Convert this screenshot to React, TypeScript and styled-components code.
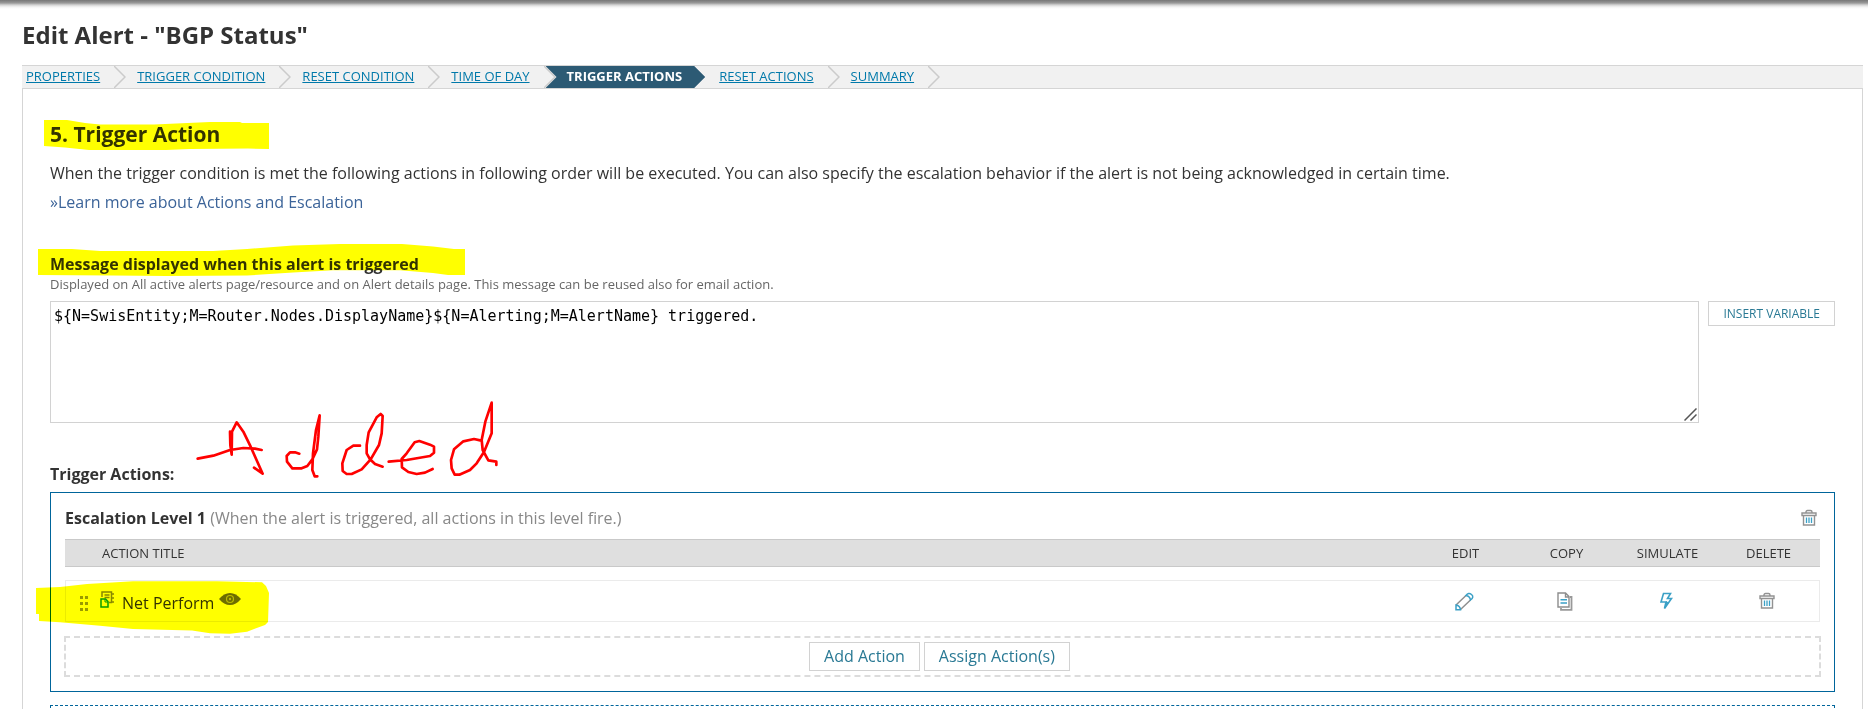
import React from "react";
import styled, { createGlobalStyle } from "styled-components";

const Global = createGlobalStyle`
  *, *::before, *::after { box-sizing: border-box; }
  body { margin: 0; background: #fff; color: #333; font: 16px/22px "Open Sans", "Noto Sans", sans-serif; }
  html { overflow: hidden; }
  #root { overflow: hidden; }
`;

const Page = styled.div`
  padding: 0 5px 0 22px;
  background: linear-gradient(#777 0, #999 3px, #d4d4d4 5px, #f4f4f4 7px, #fff 9px) top / 100% 10px no-repeat;
`;

const PageTitle = styled.h1`
  margin: 0;
  padding: 20px 0 15px;
  font-size: 24px;
  line-height: 30px;
  font-weight: 700;
`;

const Steps = styled.nav`
  display: flex;
  height: 24px;
  background: #f1f1f1;
  border-top: 1px solid #d5d5d5;
  border-bottom: 1px solid #d5d5d5;
  font-size: 13px;
  line-height: 20px;
  text-transform: uppercase;
`;

const Step = styled.span<{ $active?: boolean }>`
  display: flex;
  padding-left: ${(p) => (p.$active ? 21 : 11)}px;
  margin-left: ${(p) => (p.$active ? -10 : 0)}px;
  background: ${(p) => (p.$active ? "#2c5a74" : "none")};
  clip-path: ${(p) =>
    p.$active
      ? "polygon(0 0, calc(100% - 14px) 0, calc(100% - 3px) 50%, calc(100% - 14px) 100%, 0 100%, 11px 50%)"
      : "none"};
  color: #fff;
  font-weight: ${(p) => (p.$active ? 700 : 400)};
  &:first-child { padding-left: 4px; }
`;

const StepLink = styled.a`
  color: #0079aa;
  text-decoration: underline;
`;

const Chevron = styled.svg`
  width: 12px;
  height: 22px;
  margin-left: 14px;
  flex: none;
`;

const Panel = styled.main`
  border: 1px solid #d5d5d5;
  border-width: 0 1px;
  padding: 29px 27px 0;
`;

const Marked = styled.span`
  position: relative;
`;

const Marker = styled.svg`
  position: absolute;
  pointer-events: none;
  mix-blend-mode: multiply;
  fill: #ff0;
`;

const HeadingMarker = styled(Marker)`
  left: -6px;
  top: -1px;
  width: 226px;
  height: 32px;
`;

const LabelMarker = styled(Marker)`
  left: -12px;
  top: -10px;
  width: 428px;
  height: 34px;
`;

const RowMarker = styled(Marker)`
  left: -30px;
  top: -6px;
  width: 234px;
  height: 54px;
`;

const SectionTitle = styled.h2`
  margin: 0 0 12px;
  font-size: 21px;
  line-height: 32px;
  font-weight: 700;
`;

const Text = styled.p`
  margin: 0 0 7px;
`;

const LearnMore = styled.a`
  color: #3c6499;
  text-decoration: none;
`;

const FieldLabel = styled.label`
  display: block;
  margin-top: 40px;
  font-weight: 700;
`;

const Hint = styled.p`
  margin: 0 0 8px;
  color: #666;
  font-size: 13px;
  line-height: 18px;
`;

const MessageRow = styled.div`
  display: flex;
  align-items: flex-start;
  gap: 9px;
`;

const MessageBox = styled.div`
  position: relative;
  display: flex;
  flex: 1;
`;

const ResizeCorner = styled.svg`
  position: absolute;
  right: 2px;
  bottom: 2px;
  pointer-events: none;
`;

const Message = styled.textarea`
  flex: 1;
  height: 122px;
  padding: 5px 3px;
  border: 1px solid #d2d2d2;
  color: #000;
  font: 15px/18px "DejaVu Sans Mono", monospace;
  outline: none;
  resize: none;
`;

const Button = styled.button<{ $small?: boolean }>`
  padding: ${(p) => (p.$small ? "2px 14px" : "3px 14px")};
  background: #fff;
  border: 1px solid #d2d2d2;
  color: #297994;
  font: inherit;
  font-size: ${(p) => (p.$small ? 12 : 16)}px;
  line-height: ${(p) => (p.$small ? 19 : 21)}px;
  text-transform: ${(p) => (p.$small ? "uppercase" : "none")};
`;

const ActionsLabel = styled.h3`
  position: relative;
  margin: 40px 0 7px;
  font-size: 16px;
  line-height: 22px;
  font-weight: 700;
`;

const Handwriting = styled.svg`
  position: absolute;
  left: 130px;
  top: -73px;
  width: 340px;
  height: 100px;
  fill: none;
  stroke: #f00;
  stroke-width: 8;
  stroke-linecap: round;
  stroke-linejoin: round;
  pointer-events: none;
`;

const Level = styled.section`
  border: 1px solid #00659b;
  padding: 13px 13px 14px;
`;

const LevelHead = styled.header`
  display: flex;
  align-items: center;
  justify-content: space-between;
  height: 24px;
  margin: 0 2px 9px 1px;
  color: #888;
`;

const LevelName = styled.strong`
  color: #333;
  font-weight: 700;
`;

const IconButton = styled.button`
  display: inline-block;
  padding: 0;
  border: 0;
  background: none;
  vertical-align: top;
  svg { display: block; }
`;

const LevelDelete = styled(IconButton)`
  margin-right: 2px;
`;

const Actions = styled.table`
  width: calc(100% - 2px);
  margin: 0 1px 14px;
  table-layout: fixed;
  border-collapse: separate;
  border-spacing: 0;
  tbody::before { content: ""; display: block; height: 13px; }
`;

const HeadCell = styled.th<{ $tool?: boolean }>`
  width: ${(p) => (p.$tool ? "101px" : "auto")};
  height: 28px;
  padding: ${(p) => (p.$tool ? "0 2px 0 0" : "0 0 0 37px")};
  background: #dfdfdf;
  border: 1px solid #c9c9c9;
  border-width: 1px 0;
  font-size: 13px;
  line-height: 18px;
  font-weight: 400;
  text-align: ${(p) => (p.$tool ? "center" : "left")};
  text-transform: uppercase;
`;

const Cell = styled.td<{ $tool?: boolean }>`
  height: 42px;
  padding: ${(p) => (p.$tool ? "3px 5px 0 0" : "0")};
  border: 1px solid #ebebeb;
  border-width: 1px 0;
  text-align: center;
  vertical-align: middle;
  &:first-child { border-left-width: 1px; }
  &:last-child { border-right-width: 1px; }
`;

const ActionName = styled.div`
  position: relative;
  display: flex;
  align-items: center;
  padding: 4px 0 0 14px;
`;

const NameText = styled.span`
  margin: 0 5px 0 8px;
`;

const Raised = styled.svg`
  margin-bottom: 8px;
`;

const GripIcon = styled.svg`
  margin-right: 12px;
`;

const DropZone = styled.div`
  display: flex;
  justify-content: center;
  gap: 4px;
  padding: 4px 6px 4px 0;
  border: 2px dashed #dcdcdc;
`;

const NextLevel = styled.section`
  height: 60px;
  margin: 13px 0 -54px;
  border: 1px dashed #00659b;
`;

const TrashIcon = () => (
  <svg width="16" height="18" viewBox="0 0 16 18" fill="none">
    <path d="M5 4V3q0-1.500 1.500-1.500h3Q11 1.500 11 3v1M1 4h14v2.500H1zM2.500 6.500v9.500h11V6.500" stroke="#929292" strokeWidth="1.400" />
    <path d="M5.500 8.500v5.500M8 8.500v5.500M10.500 8.500v5.500" stroke="#3ba0c6" strokeWidth="1.300" />
  </svg>
);

const PencilIcon = () => (
  <svg width="20" height="20" viewBox="0 0 20 20" fill="none" strokeWidth="1.500">
    <path d="M2 13 12 3.500M6.500 17.500 16.500 8" stroke="#8f8f8f" />
    <path d="M2 13v4.800h4.500Q6 13.500 2 13zM12 3.500q2.500-3.500 5.500-1t-1 5.500q-.500-3.800-4.500-4.500z" stroke="#3ba0c6" />
  </svg>
);

const CopyIcon = () => (
  <svg width="16" height="19" viewBox="0 0 16 19" fill="none" strokeWidth="1.400">
    <path d="M1 1h7.500L12 4.500V15H1zM8.500 1v4H12" stroke="#8d8d8d" />
    <path d="M13 5h1.500v12.800H4V16" stroke="#999" strokeWidth="1.800" />
    <path d="M3.500 7.800h6.500M3.500 11h6.500" stroke="#3ba0c6" strokeWidth="1.600" />
  </svg>
);

const BoltIcon = () => (
  <svg width="14" height="18" viewBox="0 0 14 18" fill="none">
    <path d="M4.500 1.500h7L8.500 6.500H12.500L5.500 16.500 7 10H2z" stroke="#3ba0c6" strokeWidth="1.600" />
    <path d="M7 9 5.500 16.500l4-6z" fill="#3ba0c6" />
  </svg>
);

const Grip = () => (
  <GripIcon width="8" height="15" viewBox="0 0 8 15" fill="#9a9a9a" aria-hidden>
    {[0, 6, 12].map((y) => (
      <path key={y} d={`M0 ${y}h3v3h-3zM5 ${y}h3v3h-3z`} />
    ))}
  </GripIcon>
);

const LogIcon = () => (
  <Raised width="14" height="17" viewBox="0 0 14 17" fill="none" strokeWidth="1.500" aria-hidden>
    <path d="M2 6V1h9.500v10.500H9M11.500 3H14M11.500 7H14M11.500 11H14M4.500 4h5M4.500 6.500h5" stroke="#888" />
    <path d="M1 8h4.500L8 10.500V16H1z" fill="#fff" stroke="#0a9c2a" />
    <path d="M5 8v3h3" stroke="#0a9c2a" strokeWidth="1" />
  </Raised>
);

const EyeIcon = () => (
  <Raised width="22" height="14" viewBox="0 0 22 14" aria-hidden>
    <path d="M0 7Q5 1 11 1t11 6q-5 6-11 6T0 7z" fill="#6d6d6d" />
    <circle cx="11" cy="7" r="3.500" fill="none" stroke="#bbb" strokeWidth="1.200" />
    <circle cx="11" cy="7" r="1.200" fill="#bbb" />
  </Raised>
);

const Divider = () => (
  <Chevron viewBox="0 0 12 22" fill="none" stroke="#cbcbcb" strokeWidth="1.500" aria-hidden>
    <path d="M0 0 11 11 0 22" />
  </Chevron>
);

const steps = [
  "Properties",
  "Trigger Condition",
  "Reset Condition",
  "Time of Day",
  "Trigger Actions",
  "Reset Actions",
  "Summary",
];

const tools = [
  { name: "Edit", icon: <PencilIcon /> },
  { name: "Copy", icon: <CopyIcon /> },
  { name: "Simulate", icon: <BoltIcon /> },
  { name: "Delete", icon: <TrashIcon /> },
];

export default function App() {
  return (
    <>
      <Global />
      <Page>
        <PageTitle>Edit Alert - "BGP Status"</PageTitle>
        <Steps aria-label="Alert steps">
          {steps.map((step) => {
            const active = step === "Trigger Actions";
            return (
              <Step key={step} $active={active} aria-current={active ? "step" : undefined}>
                {active ? step : <StepLink href="#">{step}</StepLink>}
                <Divider />
              </Step>
            );
          })}
        </Steps>
        <Panel>
          <SectionTitle>
            <Marked>
              5. Trigger Action
              <HeadingMarker viewBox="44 118 226 32" aria-hidden>
                <path d="M44 119H67L85 122 100 123.500H154L210 121H240L242 122H269V148L248 147.500 190 148 166 149H89L65 146.500 44 145z" />
              </HeadingMarker>
            </Marked>
          </SectionTitle>
          <Text>
            When the trigger condition is met the following actions in following order will be executed. You can also
            specify the escalation behavior if the alert is not being acknowledged in certain time.
          </Text>
          <LearnMore href="#">»Learn more about Actions and Escalation</LearnMore>

          <FieldLabel htmlFor="message">
            <Marked>
              Message displayed when this alert is triggered
              <LabelMarker viewBox="38 243 428 34" aria-hidden>
                <path d="M38 249H72L100 251H213L247 249 293 245.500 340 244H402L433 246.500 454 249H465V275H448L433 273 400 270.300H333L293 272.500 247 275.500 167 276 113 275.500 38 275z" />
              </LabelMarker>
            </Marked>
          </FieldLabel>
          <Hint>
            Displayed on All active alerts page/resource and on Alert details page. This message can be reused also for
            email action.
          </Hint>
          <MessageRow>
            <MessageBox>
              <Message
                id="message"
                spellCheck={false}
                defaultValue="${N=SwisEntity;M=Router.Nodes.DisplayName}${N=Alerting;M=AlertName} triggered."
              />
              <ResizeCorner width="13" height="13" viewBox="0 0 13 13" stroke="#555" strokeWidth="1.500" aria-hidden>
                <path d="M.5 12.500 12.500.5M6.500 12.500 12.500 6.500" />
              </ResizeCorner>
            </MessageBox>
            <Button type="button" $small>Insert Variable</Button>
          </MessageRow>

          <ActionsLabel>
            Trigger Actions:
            <Handwriting viewBox="0 0 1020 300" aria-hidden>
              <path d="M53 206 100 197 150 180 190 174 225 176 245 180M150 125 151 165 155 194 156 125 170 97 190 125 212 170 232 215 248 251 222 233" />
              <path d="M358 191 345 187H330L320 198 321 215 337 235H365L382 228 397 208 411 178 415 140 419 76 408 120 399 190 397 240 404 259H412" />
              <path d="M540 167H520L500 180 487 220 488 243 500 252H515L545 238 572 208 597 165 605 130 608 78 602 72 590 82 566 127 560 165V190L570 208 585 222 608 230" />
              <path d="M626 215 680 210 750 198 762 188V170L750 164 718 153 704 157 680 190 665 207 666 232 685 246 710 252 735 248 758 237" />
              <path d="M904 152 882 147 850 154 822 178 813 210 815 235 824 254H838L870 240 890 220 912 186 935 130V38L916 95 905 150 908 180 925 211 949 215V225" />
            </Handwriting>
          </ActionsLabel>

          <Level>
            <LevelHead>
              <span>
                <LevelName>Escalation Level 1</LevelName> (When the alert is triggered, all actions in this level fire.)
              </span>
              <LevelDelete type="button" aria-label="Delete level">
                <TrashIcon />
              </LevelDelete>
            </LevelHead>
            <Actions>
              <thead>
                <tr>
                  <HeadCell scope="col">Action Title</HeadCell>
                  {tools.map((t) => (
                    <HeadCell key={t.name} scope="col" $tool>{t.name}</HeadCell>
                  ))}
                </tr>
              </thead>
              <tbody>
                <tr>
                  <Cell>
                    <ActionName>
                      <Grip />
                      <LogIcon />
                      <NameText>Net Perform</NameText>
                      <EyeIcon />
                      <RowMarker viewBox="36 581 234 54" aria-hidden>
                        <path d="M36 588 60 587 87 584 133 581.300H217L262 582.300 266 586 269 593 268 622 265 625 247 631.700 230 633.700 210 633.300 192 630.500 133 629 100 625.700 60 622.300 39 621V614H36z" />
                      </RowMarker>
                    </ActionName>
                  </Cell>
                  {tools.map((t) => (
                    <Cell key={t.name} $tool>
                      <IconButton type="button" aria-label={t.name}>{t.icon}</IconButton>
                    </Cell>
                  ))}
                </tr>
              </tbody>
            </Actions>
            <DropZone>
              <Button type="button">Add Action</Button>
              <Button type="button">Assign Action(s)</Button>
            </DropZone>
          </Level>
          <NextLevel />
        </Panel>
      </Page>
    </>
  );
}
